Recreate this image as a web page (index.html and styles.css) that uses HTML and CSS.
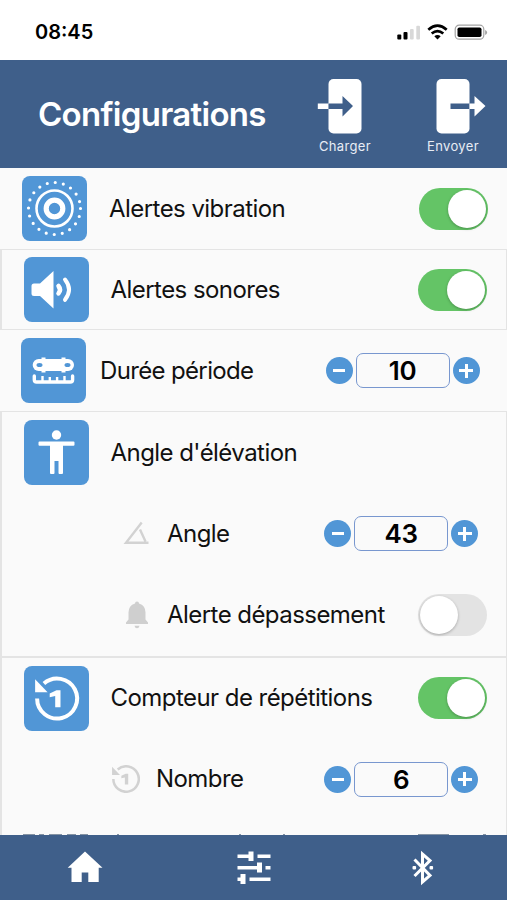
FILE: index.html
```html
<!DOCTYPE html>
<html lang="fr">
<head>
<meta charset="utf-8">
<meta name="viewport" content="width=device-width">
<title>Configurations</title>
<link rel="stylesheet" href="styles.css">
</head>
<body>
<svg width="0" height="0" class="defs">
  <symbol id="counter" viewBox="0 0 65 65">
    <path d="M13.100 32.500A20 20 0 1 0 19.900 17.500" fill="none" stroke="currentColor" stroke-width="4"/>
    <path d="M11.100 13.300v13h12.500Z" fill="currentColor"/>
    <path d="M25.700 27.500L32.500 24.300H36.500V41.300H31.200V30L25.700 31.200Z" fill="currentColor"/>
  </symbol>
</svg>
<div class="screen">
  <div class="status">
    <span class="time">08:45</span>
    <svg class="indicators" viewBox="0 0 92 18" width="92" height="18">
      <rect x="1.300" y="11.500" width="4" height="5" rx="1"/><rect x="7.500" y="9" width="4" height="7.500" rx="1"/>
      <g fill="#d8d8d8"><rect x="14" y="6" width="3.700" height="10.500" rx="1"/><rect x="20.300" y="2.800" width="3.700" height="13.700" rx="1"/></g>
      <g fill="none" stroke="#000" stroke-width="2.700"><path d="M32.300 6.700Q41.500 -1.300 50.700 6.700"/><path d="M35.700 10.600Q41.500 5.600 47.300 10.600"/></g>
      <path d="M38.300 13.200Q41.500 10.600 44.700 13.200L41.500 16.500Z"/>
      <rect x="59.200" y="2.200" width="28.600" height="14" rx="4" fill="none" stroke="#a3a3a3" stroke-width="1.200"/>
      <rect x="61.500" y="4.500" width="24" height="9.500" rx="1.800"/><path d="M89.100 7v5q2-.8 2-2.500t-2-2.500Z" fill="#a3a3a3"/>
    </svg>
  </div>
  <header class="header">
    <h1>Configurations</h1>
    <div class="action load">
      <svg viewBox="0 0 56 56" width="56" height="56"><rect x="11.500" y="1" width="33" height="54.500" rx="5" fill="#fff"/><path d="M.8 25.500h11v5.500h-11Z" fill="#fff"/><path d="M11.500 25.500h14v-7.500L36 28 25.500 38.500V31h-14Z" fill="#3f5f8a"/></svg>
      <span>Charger</span>
    </div>
    <div class="action send">
      <svg viewBox="0 0 56 56" width="56" height="56"><rect x="11.500" y="1" width="33" height="54.500" rx="5" fill="#fff"/><path d="M25.500 25.500h19V31h-19Z" fill="#3f5f8a"/><path d="M44.500 25.500h5V18L60.500 28 49.500 38.500V31h-5Z" fill="#fff"/></svg>
      <span>Envoyer</span>
    </div>
  </header>
  <main class="list">
    <section class="card vibration">
      <div class="row">
        <svg class="tile" viewBox="0 0 65 65"><g fill="none" stroke="#fff"><circle cx="32.500" cy="32.500" r="26" stroke-width="3.200" stroke-linecap="round" stroke-dasharray="0 8.168"/><circle cx="32.500" cy="32.500" r="18" stroke-width="2.600"/><circle cx="32.500" cy="32.500" r="8.300" stroke-width="5.200"/></g></svg>
        <span class="label">Alertes vibration</span><span class="toggle on"></span>
      </div>
    </section>
    <section class="card framed sound">
      <div class="row">
        <svg class="tile" viewBox="0 0 65 65"><path d="M10 26.500h6L29.500 14v37.500L16 39h-6q-2.500 0-2.500-2.500V29q0-2.500 2.500-2.500Z" fill="#fff"/><g fill="none" stroke="#fff" stroke-linecap="round"><path d="M34.500 29q3 3.700 0 7.400" stroke-width="4.500"/><path d="M41 22.500q8 10 0 20.300" stroke-width="4"/></g></svg>
        <span class="label">Alertes sonores</span><span class="toggle on"></span>
      </div>
    </section>
    <section class="card duration">
      <div class="row">
        <svg class="tile" viewBox="0 0 65 65"><rect x="11.700" y="21" width="41.300" height="12" rx="6" fill="#fff"/><path d="M20.500 21v-1.500h4V21h16v-1.500h4V21l1 6-1 6v1.500h-4V33h-16v1.500h-4V33Z" fill="#fff"/><g fill="#5196d6"><ellipse cx="18.500" cy="27" rx="3" ry="2.100"/><ellipse cx="46.500" cy="27" rx="3" ry="2.100"/></g><path d="M13.300 38v3.700q0 2.300 2.300 2.300h33.700q2.300 0 2.300-2.300V38" fill="none" stroke="#fff" stroke-width="3.400" stroke-linecap="round"/><path d="M21.500 38v5M28.800 39v4M36.100 39v4M43.500 38v5" stroke="#fff" stroke-width="2.400"/></svg>
        <span class="label">Durée période</span>
        <div class="stepper"><button class="minus"></button><output>10</output><button class="plus"></button></div>
      </div>
    </section>
    <section class="card framed angle">
      <div class="row">
        <svg class="tile" viewBox="0 0 65 65"><g fill="#fff"><circle cx="32.500" cy="15" r="4.700"/><path d="M15.500 21.500h34q1 0 1 1v2.200q0 1-1 1H39V53q0 1-1 1h-2.500q-1 0-1-1V41h-4v12q0 1-1 1H27q-1 0-1-1V25.700H15.500q-1 0-1-1v-2.200q0-1 1-1Z"/></g></svg>
        <span class="label">Angle d'élévation</span>
      </div>
      <div class="row sub">
        <svg class="small" viewBox="0 0 28 28"><path d="M18.700 2.500L3 22.800h22.500M17 9.500L22.500 21.500" fill="none" stroke="#d2d2d2" stroke-width="2.400"/></svg>
        <span class="label">Angle</span>
        <div class="stepper"><button class="minus"></button><output>43</output><button class="plus"></button></div>
      </div>
      <div class="row sub alert">
        <svg class="small" viewBox="0 0 28 28"><path d="M14 .5q2 0 2 2 6.500 2 6.500 9v7l2.500 3v1.500h-22V21.500l2.500-3v-7q0-7 6.500-9 0-2 2-2Z" fill="#cfcfcf"/><path d="M11.500 24.700h5q-.5 2.500-2.500 2.500T11.500 24.700Z" fill="#cfcfcf"/></svg>
        <span class="label">Alerte dépassement</span><span class="toggle"></span>
      </div>
    </section>
    <section class="card framed repeats">
      <div class="row">
        <svg class="tile"><use href="#counter"/></svg>
        <span class="label">Compteur de répétitions</span><span class="toggle on"></span>
      </div>
      <div class="row sub number">
        <svg class="small" viewBox="11 10.500 44 44"><use href="#counter" width="65" height="65"/></svg>
        <span class="label">Nombre</span>
        <div class="stepper"><button class="minus"></button><output>6</output><button class="plus"></button></div>
      </div>
      <svg class="peek" viewBox="0 0 507 2" width="507" height="2"><path d="M23 1h12m4 0h5m5 0h13m5 0h9m4 0h8M117 1h2m120 0h2m42 0h2M418 1h31m34 0h3" stroke="#8593a3" stroke-width="2"/></svg>
    </section>
  </main>
  <nav class="nav">
    <svg viewBox="0 0 36 36"><path d="M18 1.500l17.500 16.300h-3.800V32H21.300V22.500h-6.600V32H4.500V17.800H.7Z"/></svg>
    <svg viewBox="0 0 36 36"><path d="M1.500 4.500h11v-3h5v9.500h-5V8h-11ZM21.500 4.500h13V8h-13ZM1.500 16h19.500v-3.500h5v10h-5v-3H1.500ZM29.500 16h5v3.500h-5ZM1.500 27.500h3v-3.500h5v10h-5v-3h-3ZM13.500 27.500h21V31h-21Z"/></svg>
    <svg viewBox="0 0 36 36"><path d="M9.500 9.500L25 25.500 17.500 32V4L25 10.500 9.500 26" fill="none" stroke="#fff" stroke-width="3"/><rect x="7.500" y="16" width="3.600" height="3.600" rx="1"/><rect x="24.500" y="16" width="3.600" height="3.600" rx="1"/></svg>
  </nav>
</div>
</body>
</html>
```

FILE: styles.css
```css
* { box-sizing: border-box; }
body { margin: 0; background: #fff; color: #111; font-family: Inter, "Liberation Sans", sans-serif; }
.defs { display: none; }
.screen { width: 507px; height: 900px; display: flex; flex-direction: column; overflow: hidden; }
.status { height: 60px; flex: none; display: flex; align-items: center; justify-content: space-between; padding: 3px 19px 0 35px; }
.time { font-size: 20px; font-weight: 600; letter-spacing: 0; color: #000; }
.header { height: 107.500px; flex: none; display: flex; background: #3f5f8a; color: #fff; padding-left: 38px; }
h1 { margin: 0; width: 268px; font-size: 33px; line-height: 109px; font-weight: 600; letter-spacing: -.7px; }
.action { display: flex; flex-direction: column; align-items: center; width: 78px; padding-top: 18px; }
.action svg { overflow: visible; flex: none; }
.action span { font-size: 13px; line-height: 16px; margin-top: 4px; letter-spacing: .35px; color: #e8edf5; }
.send { margin-left: 30px; }
.list { flex: 1; min-height: 0; overflow: hidden; background: #fafafa; }
.card { padding: 0 19px 0 22px; }
.framed { border: 2px solid #e4e4e4; border-right-width: 1px; padding: 0 19.500px 0 21.500px; }
.vibration { height: 81.500px; }
.sound { height: 81px; border-width: 1px 1px 1px 2px; }
.duration { height: 81px; padding-left: 21px; }
.angle { height: 244.500px; border-top-width: 1px; border-bottom: 0; }
.repeats { height: 260px; }
.row { height: 81px; display: flex; align-items: center; }
.vibration .row { height: 82px; }
.sound .row { height: 79px; }
.repeats .row { height: 81px; }
.tile { width: 65px; height: 65px; border-radius: 8px; background: #5196d6; color: #fff; flex: none; }
.label { font-size: 24px; line-height: 30px; margin-left: 22px; white-space: nowrap; flex: 1; letter-spacing: -.55px; }
.vibration .label { padding-top: 1px; }
.duration .label { margin-left: 14px; letter-spacing: -.65px; }
.toggle { width: 69px; height: 42px; flex: none; border-radius: 21px; background: #e3e3e3; display: flex; padding: 2px; }
.toggle::before { content: ""; width: 38px; height: 38px; border-radius: 50%; background: #fff; box-shadow: 0 1px 3px #0004; }
.toggle.on { background: #64c466; justify-content: flex-end; }
.stepper { display: flex; align-items: center; gap: 3px; margin-right: 8.500px; }
.stepper output { width: 94px; height: 35px; border: 1.500px solid #7897cf; border-radius: 7px; text-align: center; font-size: 26px; font-weight: 600; line-height: 33px; color: #000; letter-spacing: -.4px; }
button { width: 27px; height: 27px; border: 0; border-radius: 50%; padding: 0; background: linear-gradient(#fff, #fff) center / 12px 3px no-repeat #5196d6; }
.plus { background: linear-gradient(#fff, #fff) center / 14px 3px no-repeat, linear-gradient(#fff, #fff) center / 3px 14px no-repeat #5196d6; }
.small { width: 28px; height: 28px; color: #d2d2d2; flex: none; }
.sub { padding-left: 99.500px; }
.sub .label { margin-left: 16px; }
.number { padding-left: 88.500px; }
.peek { display: block; margin: 14px 0 0 -23.500px; }
.nav { height: 65.500px; flex: none; background: #3f5f8a; display: flex; justify-content: space-around; align-items: center; padding-top: 1px; }
.nav svg { width: 36px; height: 36px; fill: #fff; }
```
